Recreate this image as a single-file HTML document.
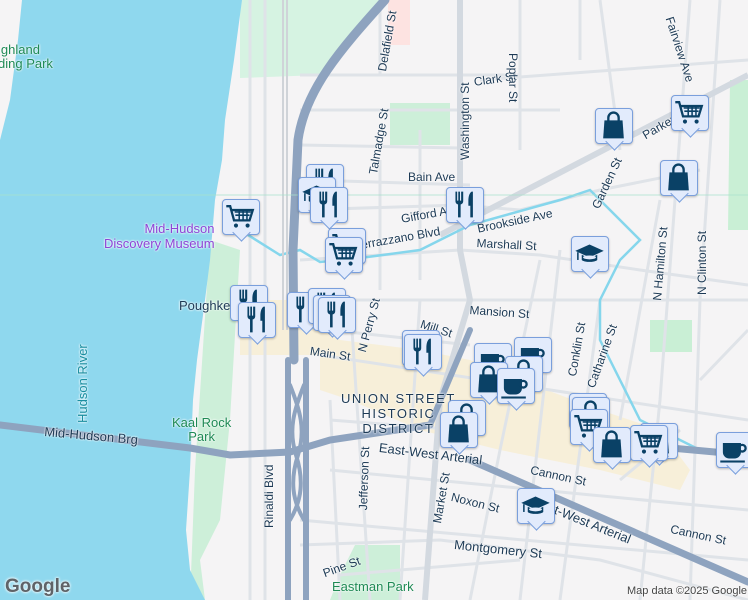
<!DOCTYPE html>
<html><head><meta charset="utf-8">
<style>
*{margin:0;padding:0;box-sizing:border-box}
body{width:748px;height:600px;overflow:hidden;background:#f5f4f5;font-family:"Liberation Sans",Arial,sans-serif;position:relative}
svg.map{position:absolute;left:0;top:0}
.lbl{position:absolute;font-size:12px;color:#1d3a55;white-space:nowrap;transform-origin:0 0;text-shadow:0 0 2px #fff,0 0 2px #fff}
.mk{position:absolute;z-index:0;width:38px;height:36px;background:#e2ebfc;border:1.5px solid #7a9fdc;border-radius:4px;box-shadow:0 1px 2px rgba(0,0,0,.25)}
.mk:after{content:"";position:absolute;z-index:-1;left:12px;top:26px;width:12px;height:12px;background:#e2ebfc;border-right:1.5px solid #7a9fdc;border-bottom:1.5px solid #7a9fdc;transform:rotate(45deg)}
.mk svg{position:absolute;left:2px;top:1px}
</style></head><body>
<svg class="map" width="748" height="600" viewBox="0 0 748 600">
<path d="M240 0H388L340 50 320 75 240 78Z" fill="#d6f3e2"/>
<rect x="388" y="0" width="22" height="45" fill="#fde3e1"/>
<path d="M390 103H450V145H390Z" fill="#cdefd9"/>
<path d="M730 80H748V230H728Z" fill="#c9efd5"/>
<rect x="650" y="320" width="42" height="32" fill="#c9efd5"/>
<path d="M210 240L240 250 230 420 220 520 200 560 205 600H190L195 470Z" fill="#cdefd9"/>
<path d="M355 545H400V600H330L340 575Z" fill="#cdefd9"/>
<path d="M240 300L300 300 340 340 420 350 470 360 520 380 600 410 660 430 690 470 680 490 600 470 500 450 420 430 350 400 320 390 320 355 240 355Z" fill="#f7efd9"/>
<path d="M22 0H242L234 60 225 120 222 160 215 200 210 260 205 300 197 360 193 400 190 470 186 530 190 570 205 600H0V140L10 100 18 40Z" fill="#8fd8ee"/>
<g stroke="#dfe3e8" stroke-width="3" fill="none">
<path d="M300 75H520M300 110H560M300 145L460 148M310 180L470 185M300 210L460 205 520 210 600 190 700 170M380 160V290M420 130V280M480 80L748 60M300 260L460 250 540 255 640 270 748 285M320 300H460 560 748 320M330 330L470 345M320 355L748 420M330 420L460 430M330 470L748 510M300 520L748 560M300 545L440 540 600 560 748 600M340 575L520 560"/>
<path d="M380 0V75M520 0V150M600 0L620 150M690 0L660 400 640 600M720 0L700 300 690 600M580 0V60M560 250L520 600M600 300L560 600M660 200L620 420M540 260L500 450 470 600M420 300L400 600M350 300L370 600M330 400L340 600M250 0V600M265 0V600"/>
<path d="M700 380L748 330M620 480L680 430"/>
</g>
<g stroke="#d3d9e0" stroke-width="6" fill="none">
<path d="M460 0V250L470 300 440 400 425 600"/>
<path d="M440 235L748 75"/>
</g>
<path d="M240 230L280 255 300 250 320 262 360 258 420 250 470 225 560 200 590 190 610 210 640 240 620 260 600 300 600 340 620 380 640 420 700 450 748 455" stroke="#85d6ec" stroke-width="2.5" fill="none"/>
<g stroke="#8ea3bf" fill="none" stroke-linecap="round">
<path d="M0 425L190 448 230 455 290 452 330 440 430 425" stroke-width="7"/>
<path d="M430 425L470 330" stroke-width="6"/>
<path d="M470 460L748 582" stroke-width="7"/>
<path d="M660 447L748 455" stroke-width="7"/>
<path d="M385 0C340 50 305 90 298 140L293 250 294 360" stroke-width="9"/>
<path d="M288 360V600M306 360V600" stroke-width="6"/>
<path d="M290 385C300 410 306 430 298 455 290 480 292 500 304 520M304 385C294 410 288 430 296 455 304 480 302 500 290 520" stroke-width="4"/>
</g>
<path d="M283 0V330M287 0V330" stroke="#cfd3d8" stroke-width="2"/>
<path d="M0 195H748" stroke="#a8e2cb" stroke-width=".8"/>
</svg>

<div class="lbl" style="left:-2px;top:42px;color:#1f8a55;font-size:13px">ighland</div>
<div class="lbl" style="left:-2px;top:56px;color:#1f8a55;font-size:13px">ding Park</div>
<div class="lbl" style="left:104px;top:221px;color:#8e44d6;font-size:13px;line-height:15px;text-align:right">Mid-Hudson<br>Discovery Museum</div>
<div class="lbl" style="left:179px;top:298px;font-size:13px">Poughke</div>
<div class="lbl" style="left:75px;top:423px;color:#1a8ea0;font-size:13px;transform:rotate(-90deg)">Hudson River</div>
<div class="lbl" style="left:45px;top:424px;transform:rotate(5deg);font-size:13px">Mid-Hudson Brg</div>
<div class="lbl" style="left:172px;top:416px;color:#1f8a55;font-size:13px;line-height:14px;text-align:center">Kaal Rock<br>Park</div>
<div class="lbl" style="left:341px;top:391px;font-size:13px;letter-spacing:1.5px;line-height:15px;text-align:center">UNION STREET<br>HISTORIC<br>DISTRICT</div>
<div class="lbl" style="left:311px;top:344px;transform:rotate(8deg)">Main St</div>
<div class="lbl" style="left:380px;top:440px;transform:rotate(7deg);font-size:13px">East-West Arterial</div>
<div class="lbl" style="left:545px;top:497px;transform:rotate(22deg);font-size:13px">ast-West Arterial</div>
<div class="lbl" style="left:470px;top:303px;transform:rotate(4deg)">Mansion St</div>
<div class="lbl" style="left:423px;top:317px;transform:rotate(18deg)">Mill St</div>
<div class="lbl" style="left:477px;top:236px;transform:rotate(3deg)">Marshall St</div>
<div class="lbl" style="left:476px;top:222px;transform:rotate(-12deg)">Brookside Ave</div>
<div class="lbl" style="left:400px;top:212px;transform:rotate(-10deg)">Gifford A</div>
<div class="lbl" style="left:360px;top:238px;transform:rotate(-10deg)">errazzano Blvd</div>
<div class="lbl" style="left:408px;top:170px">Bain Ave</div>
<div class="lbl" style="left:473px;top:75px;transform:rotate(-8deg)">Clark St</div>
<div class="lbl" style="left:458px;top:160px;transform:rotate(-90deg)">Washington St</div>
<div class="lbl" style="left:520px;top:53px;transform:rotate(90deg)">Poplar St</div>
<div class="lbl" style="left:375px;top:70px;transform:rotate(-80deg)">Delafield St</div>
<div class="lbl" style="left:366px;top:173px;transform:rotate(-80deg)">Talmadge St</div>
<div class="lbl" style="left:640px;top:130px;transform:rotate(-30deg)">Parker Ave</div>
<div class="lbl" style="left:589px;top:205px;transform:rotate(-65deg)">Garden St</div>
<div class="lbl" style="left:676px;top:15px;transform:rotate(72deg)">Fairview Ave</div>
<div class="lbl" style="left:355px;top:350px;transform:rotate(-75deg)">N Perry St</div>
<div class="lbl" style="left:565px;top:375px;transform:rotate(-80deg)">Conklin St</div>
<div class="lbl" style="left:584px;top:385px;transform:rotate(-70deg)">Catharine St</div>
<div class="lbl" style="left:650px;top:300px;transform:rotate(-85deg)">N Hamilton St</div>
<div class="lbl" style="left:695px;top:295px;transform:rotate(-90deg)">N Clinton St</div>
<div class="lbl" style="left:532px;top:463px;transform:rotate(12deg)">Cannon St</div>
<div class="lbl" style="left:672px;top:522px;transform:rotate(12deg)">Cannon St</div>
<div class="lbl" style="left:453px;top:490px;transform:rotate(14deg)">Noxon St</div>
<div class="lbl" style="left:455px;top:537px;transform:rotate(6deg);font-size:13px">Montgomery St</div>
<div class="lbl" style="left:430px;top:522px;transform:rotate(-80deg)">Market St</div>
<div class="lbl" style="left:356px;top:510px;transform:rotate(-88deg)">Jefferson St</div>
<div class="lbl" style="left:262px;top:528px;transform:rotate(-90deg)">Rinaldi Blvd</div>
<div class="lbl" style="left:321px;top:567px;transform:rotate(-20deg)">Pine St</div>
<div class="lbl" style="left:332px;top:579px;color:#1f8a55;font-size:13px">Eastman Park</div>
<div class="lbl" style="left:627px;top:585px;font-size:11px;color:#444">Map data ©2025 Google</div>
<div class="lbl" style="left:5px;top:576px;font-size:19px;font-weight:bold;color:#5f6368;text-shadow:0 0 2px #fff,0 0 3px #fff">Google</div>

<div id="mk"></div>
<script>
var N='#0a4166';
var I={
f:'<path d="M5 2h1.3v7h.9V2h1.3v7h.9V2H11v7.5c0 1.3-.8 2.2-2 2.5V22H7V12c-1.2-.3-2-1.2-2-2.5z M17.5 2c-1.8 1.2-2.5 4-2.5 7v4h1.5v9h2V2z" fill="'+N+'"/>',
c:'<g fill="none" stroke="'+N+'" stroke-width="1.8"><path d="M1 4h3l3 11h12l2.5-8H5.5"/></g><path d="M7.5 8.5h12.5M8 11h11M11 7v8M14 7v8M17 7v8" stroke="'+N+'" stroke-width="1.2"/><circle cx="8.5" cy="19" r="1.6" fill="'+N+'"/><circle cx="17.5" cy="19" r="1.6" fill="'+N+'"/>',
b:'<path d="M8 9V6a4 4 0 0 1 8 0v3" stroke="'+N+'" stroke-width="1.8" fill="none"/><path d="M5 8h14l1 14H4z" fill="'+N+'"/>',
k:'<path d="M3 7h14v7a5 5 0 0 1-5 5H8a5 5 0 0 1-5-5z" fill="'+N+'"/><circle cx="18" cy="11" r="2.6" fill="none" stroke="'+N+'" stroke-width="1.8"/><rect x="1" y="20.5" width="19" height="1.6" fill="'+N+'"/>',
s:'<path d="M12 5 1 10l11 5 11-5z" fill="'+N+'"/><path d="M6 13v4c2 2 10 2 12 0v-4l-6 3z" fill="'+N+'"/><path d="M3 11v6" stroke="'+N+'" stroke-width="1.2"/><ellipse cx="12" cy="15" rx="5" ry="1.5" fill="#e2ebfc"/>'
};
var M=[['b',595,108],['c',671,95],['b',660,160],['c',222,199],['f',306,164],['s',298,177],['f',310,187],['c',328,228],['c',325,237],['f',446,187],['s',571,236],['f',230,285],['f',238,302],['f',287,292],['f',308,288],['f',313,295],['f',318,297],['f',402,330],['f',404,334],['k',514,337],['k',474,343],['b',505,356],['b',470,362],['k',497,368],['b',448,400],['b',440,412],['c',569,393],['b',572,397],['c',570,409],['b',640,423],['c',630,425],['b',593,427],['k',716,432],['s',517,488]];
var h='';M.forEach(function(m){h+='<div class="mk" style="left:'+m[1]+'px;top:'+m[2]+'px"><svg width="31" height="31" viewBox="0 0 24 24">'+I[m[0]]+'</svg></div>';});
document.getElementById('mk').innerHTML=h;
</script>
</body></html>
